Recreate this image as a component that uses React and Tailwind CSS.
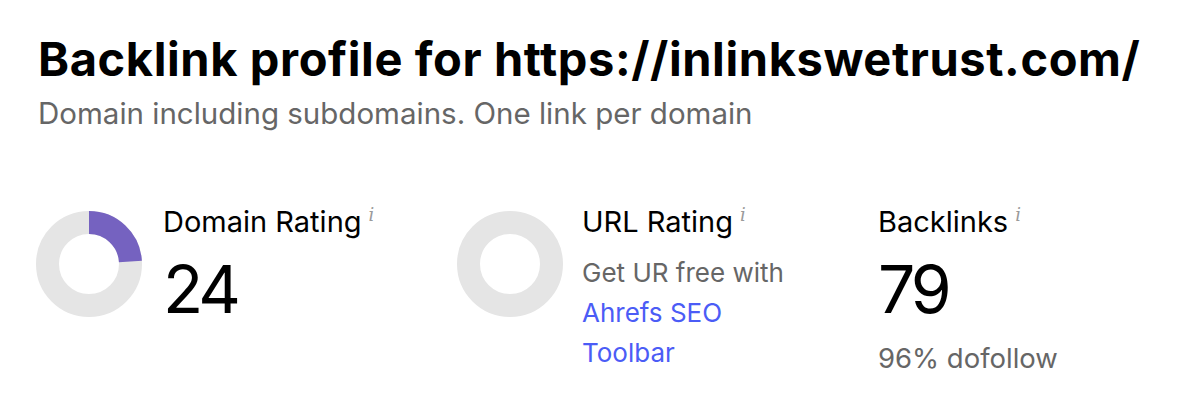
import React from "react";

const PURPLE = "#7562c0";

function Donut({ value = 0 }) {
  // ring: outer r 53, inner r 30 -> stroke 23, mid radius 41.5
  const r = 41.5;
  const c = 2 * Math.PI * r;
  const dash = (value / 100) * c;
  return (
    <svg width="106" height="106" viewBox="0 0 106 106" className="shrink-0">
      <circle cx="53" cy="53" r={r} fill="none" stroke="#e5e5e5" strokeWidth="23" />
      {value > 0 && (
        <circle
          cx="53"
          cy="53"
          r={r}
          fill="none"
          stroke={PURPLE}
          strokeWidth="23"
          strokeDasharray={`${dash} ${c}`}
          transform="rotate(-90 53 53)"
        />
      )}
    </svg>
  );
}

function Label({ children }) {
  return (
    <div className="flex items-start text-[29px] leading-[36px] text-black">
      <span>{children}</span>
      <i className="ml-[7px] mt-[1px] text-[18px] leading-[20px] text-[#9a9a9a] font-['DejaVu_Serif',serif]">i</i>
    </div>
  );
}

export default function App() {
  return (
    <div className="w-[1200px] h-[401px] bg-white font-['Inter',sans-serif] pl-[38px] pt-[31px]">
      <h1 className="text-[47px] leading-[56px] font-bold text-black tracking-[0.6px]">
        Backlink profile for https://inlinkswetrust.com/
      </h1>
      <p className="mt-[8px] text-[29.5px] leading-[36px] text-[#666]">
        Domain including subdomains. One link per domain
      </p>

      <div className="mt-[73px] flex">
        {/* Domain Rating */}
        <div className="flex w-[421px] -ml-[2px]">
          <div className="pt-[7px]">
            <Donut value={24} />
          </div>
          <div className="ml-[21px]">
            <Label>Domain Rating</Label>
            <div className="mt-[16px] text-[66px] leading-[66px] tracking-[-4px] text-black">24</div>
          </div>
        </div>

        {/* URL Rating */}
        <div className="flex w-[421px]">
          <div className="pt-[7px]">
            <Donut value={0} />
          </div>
          <div className="ml-[19px]">
            <Label>URL Rating</Label>
            <div className="mt-[13px] text-[26px] leading-[40px] text-[#666]">
              Get UR free with
              <br />
              <a href="#" className="text-[#4b5cf6]">
                Ahrefs SEO
                <br />
                Toolbar
              </a>
            </div>
          </div>
        </div>

        {/* Backlinks */}
        <div>
          <Label>Backlinks</Label>
          <div className="mt-[16px] text-[66px] leading-[66px] tracking-[-4px] text-black">79</div>
          <div className="mt-[20px] text-[27.5px] leading-[32px] text-[#666]">96% dofollow</div>
        </div>
      </div>
    </div>
  );
}
